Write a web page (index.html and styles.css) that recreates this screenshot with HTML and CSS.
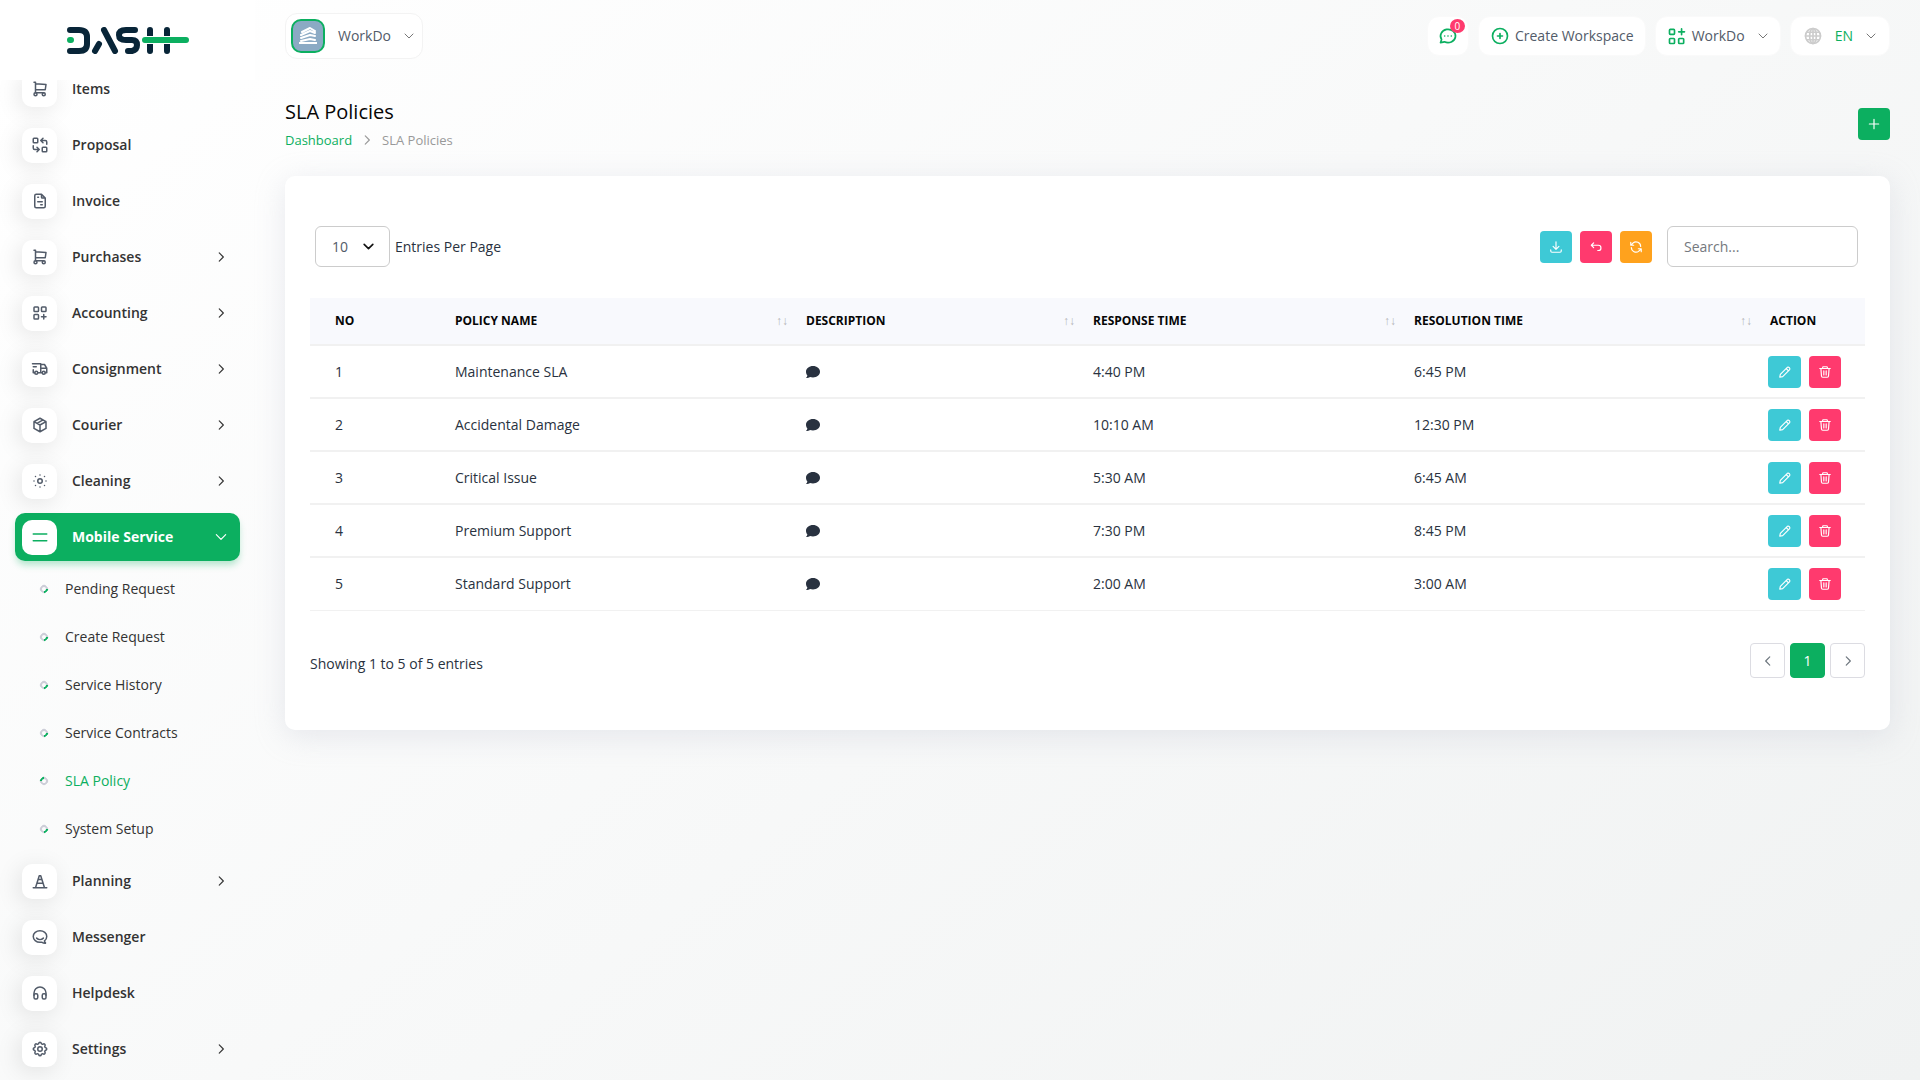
FILE: index.html
```html
<!DOCTYPE html>
<html lang="en">
<head>
    <meta charset="UTF-8">
    <meta name="viewport" content="width=device-width, initial-scale=1.0">
    <title>SLA Policies | WorkDo Dash</title>
    <link rel="stylesheet" href="styles.css">
</head>
<body>

    <!-- Icon set -->
    <svg class="icon-set" xmlns="http://www.w3.org/2000/svg" aria-hidden="true">
        <symbol id="i-cart" viewBox="0 0 24 24"><circle cx="6" cy="19" r="2"/><circle cx="17" cy="19" r="2"/><path d="M17 17H6V3H4M6 5l14 1-1 7H6"/></symbol>
        <symbol id="i-replace" viewBox="0 0 24 24"><rect x="3" y="3" width="6" height="6" rx="1"/><rect x="15" y="15" width="6" height="6" rx="1"/><path d="M21 11V8a2 2 0 0 0-2-2h-6l3 3m0-6-3 3M3 13v3a2 2 0 0 0 2 2h6l-3-3m0 6 3-3"/></symbol>
        <symbol id="i-invoice" viewBox="0 0 24 24"><path d="M14 3v4a1 1 0 0 0 1 1h4M17 21H7a2 2 0 0 1-2-2V5a2 2 0 0 1 2-2h7l5 5v11a2 2 0 0 1-2 2zM9 7h1M9 13h6M13 17h2"/></symbol>
        <symbol id="i-grid-add" viewBox="0 0 24 24"><rect x="4" y="4" width="6" height="6" rx="1"/><rect x="14" y="4" width="6" height="6" rx="1"/><rect x="4" y="14" width="6" height="6" rx="1"/><path d="M14 17h6M17 14v6"/></symbol>
        <symbol id="i-apps" viewBox="0 0 24 24"><rect x="3" y="4" width="6" height="6" rx="1"/><rect x="3" y="15" width="6" height="6" rx="1"/><rect x="14" y="15" width="6" height="6" rx="1"/><path d="M14 7h7M17.500 3.500v7"/></symbol>
        <symbol id="i-truck" viewBox="0 0 24 24"><circle cx="7" cy="17" r="2"/><circle cx="17" cy="17" r="2"/><path d="M5 17H3v-4M2 5h11v12m-4 0h6m4 0h2v-6h-8m0-5h5l3 5M3 9h4"/></symbol>
        <symbol id="i-package" viewBox="0 0 24 24"><path d="m12 3 8 4.500v9L12 21l-8-4.500v-9zM12 12l8-4.500M12 12v9M12 12 4 7.500M16 5.250l-8 4.500"/></symbol>
        <symbol id="i-sun" viewBox="0 0 24 24"><circle cx="12" cy="12" r="3"/><path d="M12 4h.01M18 6h.01M20 12h.01M18 18h.01M12 20h.01M6 18h.01M4 12h.01M6 6h.01"/></symbol>
        <symbol id="i-lines" viewBox="0 0 24 24"><path d="M3 8h18M3 17h18"/></symbol>
        <symbol id="i-cone" viewBox="0 0 24 24"><path d="M3 21h18M9.400 10h5.200M7.800 15h8.400M6 21l5-16h2l5 16"/></symbol>
        <symbol id="i-messenger" viewBox="0 0 24 24"><path d="M17.800 17.300s.1-.1.200-.2c1.800-1.400 3-3.500 3-5.800 0-4.300-4-7.700-9-7.700s-9 3.400-9 7.700S7 19 12 19c.4 0 1.100 0 2.100-.1 1.300.8 3.100 1.500 4.700 1.500.5 0 .7-.4.400-.8-.5-.6-1.100-1.600-1.400-2.300zM7.500 13.500c2.500 2.500 6.500 2.500 9 0"/></symbol>
        <symbol id="i-headset" viewBox="0 0 24 24"><rect x="4" y="13" width="5" height="7" rx="2"/><rect x="15" y="13" width="5" height="7" rx="2"/><path d="M4 15v-3a8 8 0 0 1 16 0v3"/></symbol>
        <symbol id="i-gear" viewBox="0 0 24 24"><path d="M10.325 4.317c.426-1.756 2.924-1.756 3.350 0a1.724 1.724 0 0 0 2.573 1.066c1.543-.94 3.310.826 2.370 2.370a1.724 1.724 0 0 0 1.065 2.572c1.756.426 1.756 2.924 0 3.350a1.724 1.724 0 0 0-1.066 2.573c.94 1.543-.826 3.310-2.370 2.370a1.724 1.724 0 0 0-2.572 1.065c-.426 1.756-2.924 1.756-3.350 0a1.724 1.724 0 0 0-2.573-1.066c-1.543.94-3.310-.826-2.370-2.370a1.724 1.724 0 0 0-1.065-2.572c-1.756-.426-1.756-2.924 0-3.350a1.724 1.724 0 0 0 1.066-2.573c-.94-1.543.826-3.310 2.370-2.370 1 .608 2.296.07 2.572-1.065z"/><circle cx="12" cy="12" r="3"/></symbol>
        <symbol id="i-right" viewBox="0 0 24 24"><path d="m9 5 7 7-7 7"/></symbol>
        <symbol id="i-left" viewBox="0 0 24 24"><path d="m15 5-7 7 7 7"/></symbol>
        <symbol id="i-down" viewBox="0 0 24 24"><path d="m4 8 8 8 8-8"/></symbol>
        <symbol id="i-chat" viewBox="0 0 24 24"><path d="m3 20 1.300-3.900a9 8 0 1 1 3.400 2.900zM8 12h.01M12 12h.01M16 12h.01"/></symbol>
        <symbol id="i-plus-circle" viewBox="0 0 24 24"><circle cx="12" cy="12" r="9"/><path d="M9 12h6M12 9v6"/></symbol>
        <symbol id="i-globe" viewBox="0 0 24 24"><circle cx="12" cy="12" r="9"/><ellipse cx="12" cy="12" rx="4" ry="9"/><path d="M3 12h18M12 3v18M4.500 7.500h15M4.500 16.500h15"/></symbol>
        <symbol id="i-plus" viewBox="0 0 24 24"><path d="M12 4v16M4 12h16"/></symbol>
        <symbol id="i-download" viewBox="0 0 24 24"><path d="M3 17v2a2 2 0 0 0 2 2h14a2 2 0 0 0 2-2v-2M7 11l5 5 5-5M12 3v13"/></symbol>
        <symbol id="i-undo" viewBox="0 0 24 24"><path d="M8 13 4 9l4-4M4 9h12a4 4 0 0 1 0 9h-1"/></symbol>
        <symbol id="i-refresh" viewBox="0 0 24 24"><path d="M4 13a8 8 0 0 0 13 6M20 11A8 8 0 0 0 7 5M3 4v5h5M21 20v-5h-5M4 9a9 9 0 0 1 3-4M20 15a9 9 0 0 1-3 4"/></symbol>
        <symbol id="i-pencil" viewBox="0 0 24 24"><path d="M3 21l1-5L16 4a3 3 0 0 1 4 4L8 20zM14 6l4 4"/></symbol>
        <symbol id="i-trash" viewBox="0 0 24 24"><path d="M3 6h18M10 10v7M14 10v7M5 6l1 13a2 2 0 0 0 2 2h8a2 2 0 0 0 2-2l1-13M8 6V4a1 1 0 0 1 1-1h6a1 1 0 0 1 1 1v2"/></symbol>
        <symbol id="i-comment" viewBox="0 0 14 14"><path d="M7 1c3.900 0 7 2.500 7 5.700s-3.100 5.700-7 5.700c-1.100 0-2.100-.2-3-.5-.9.700-2.300 1.100-4 1.100.8-.8 1.300-1.700 1.400-2.600C.5 9.400 0 8.100 0 6.700 0 3.500 3.100 1 7 1z"/></symbol>
    </svg>

    <aside class="sidebar">
        <a class="logo" href="#" aria-label="Dash">
            <svg width="123" height="27" viewBox="0 0 123 27">
                <path d="M4 3h9q8 0 8 7v7q0 7-8 7H4"/>
                <path d="M29 24l4-7M38 3l11 21"/>
                <path d="M69 3H60q-7 0-7 5t7 5h6q5 0 5 5t-5 6H62"/>
                <path d="M84 3v21M101 3v21"/>
                <path class="gap" d="M80 13h38"/>
                <path class="bar" d="M4 13h1M79 13h41"/>
            </svg>
        </a>
        <nav class="menu" aria-label="Main">
            <ul class="menu-list">
                <li><a href="#"><span class="menu-icon"><svg><use href="#i-cart"/></svg></span>Items</a></li>
                <li><a href="#"><span class="menu-icon"><svg><use href="#i-replace"/></svg></span>Proposal</a></li>
                <li><a href="#"><span class="menu-icon"><svg><use href="#i-invoice"/></svg></span>Invoice</a></li>
                <li><a href="#"><span class="menu-icon"><svg><use href="#i-cart"/></svg></span>Purchases<svg class="arrow"><use href="#i-right"/></svg></a></li>
                <li><a href="#"><span class="menu-icon"><svg><use href="#i-grid-add"/></svg></span>Accounting<svg class="arrow"><use href="#i-right"/></svg></a></li>
                <li><a href="#"><span class="menu-icon"><svg><use href="#i-truck"/></svg></span>Consignment<svg class="arrow"><use href="#i-right"/></svg></a></li>
                <li><a href="#"><span class="menu-icon"><svg><use href="#i-package"/></svg></span>Courier<svg class="arrow"><use href="#i-right"/></svg></a></li>
                <li><a href="#"><span class="menu-icon"><svg><use href="#i-sun"/></svg></span>Cleaning<svg class="arrow"><use href="#i-right"/></svg></a></li>
                <li>
                    <a class="active" href="#"><span class="menu-icon"><svg><use href="#i-lines"/></svg></span>Mobile Service<svg class="arrow"><use href="#i-down"/></svg></a>
                    <ul class="submenu">
                        <li><a href="#">Pending Request</a></li>
                        <li><a href="#">Create Request</a></li>
                        <li><a href="#">Service History</a></li>
                        <li><a href="#">Service Contracts</a></li>
                        <li><a class="current" href="#" aria-current="page">SLA Policy</a></li>
                        <li><a href="#">System Setup</a></li>
                    </ul>
                </li>
                <li><a href="#"><span class="menu-icon"><svg><use href="#i-cone"/></svg></span>Planning<svg class="arrow"><use href="#i-right"/></svg></a></li>
                <li><a href="#"><span class="menu-icon"><svg><use href="#i-messenger"/></svg></span>Messenger</a></li>
                <li><a href="#"><span class="menu-icon"><svg><use href="#i-headset"/></svg></span>Helpdesk</a></li>
                <li><a href="#"><span class="menu-icon"><svg><use href="#i-gear"/></svg></span>Settings<svg class="arrow"><use href="#i-right"/></svg></a></li>
            </ul>
        </nav>
    </aside>

    <div class="page">
        <header class="topbar">
            <button class="top-btn profile" type="button">
                <span class="avatar">
                    <svg viewBox="0 0 18 18"><path d="M3 5l8-4 5 3M2 8l9-4 5 2M2 11l9-3 5 1M2 14l9-2 5 1M0 16h18"/></svg>
                </span>
                WorkDo
                <svg class="caret"><use href="#i-down"/></svg>
            </button>
            <div class="top-actions">
                <button class="top-btn chat" type="button" aria-label="Messages"><svg><use href="#i-chat"/></svg><span class="badge">0</span></button>
                <button class="top-btn" type="button"><svg><use href="#i-plus-circle"/></svg>Create Workspace</button>
                <button class="top-btn" type="button"><svg><use href="#i-apps"/></svg>WorkDo<svg class="caret"><use href="#i-down"/></svg></button>
                <button class="top-btn lang" type="button"><svg class="globe"><use href="#i-globe"/></svg>EN<svg class="caret"><use href="#i-down"/></svg></button>
            </div>
        </header>

        <main>
            <div class="page-header">
                <div>
                    <h1>SLA Policies</h1>
                    <nav class="breadcrumb" aria-label="Breadcrumb">
                        <a href="#">Dashboard</a>
                        <svg><use href="#i-right"/></svg>
                        <span>SLA Policies</span>
                    </nav>
                </div>
                <button class="btn btn-green" type="button" aria-label="Create"><svg><use href="#i-plus"/></svg></button>
            </div>

            <section class="card">
                <div class="toolbar">
                    <div class="entries">
                        <div class="select-wrap">
                            <select id="per-page">
                                <option>10</option>
                                <option>25</option>
                                <option>50</option>
                            </select>
                            <svg><use href="#i-down"/></svg>
                        </div>
                        <label for="per-page">Entries Per Page</label>
                    </div>
                    <div class="tools">
                        <button class="btn btn-cyan" type="button" aria-label="Export"><svg><use href="#i-download"/></svg></button>
                        <button class="btn btn-pink" type="button" aria-label="Reset"><svg><use href="#i-undo"/></svg></button>
                        <button class="btn btn-orange" type="button" aria-label="Reload"><svg><use href="#i-refresh"/></svg></button>
                        <input class="search" type="text" placeholder="Search..." aria-label="Search">
                    </div>
                </div>

                <table>
                    <colgroup>
                        <col class="col-no"><col class="col-name"><col class="col-desc"><col class="col-response"><col class="col-resolution"><col class="col-action">
                    </colgroup>
                    <thead>
                        <tr>
                            <th>No</th>
                            <th><div class="sort">Policy Name<span>↑↓</span></div></th>
                            <th><div class="sort">Description<span>↑↓</span></div></th>
                            <th><div class="sort">Response Time<span>↑↓</span></div></th>
                            <th><div class="sort">Resolution Time<span>↑↓</span></div></th>
                            <th>Action</th>
                        </tr>
                    </thead>
                    <tbody>
                        <tr>
                            <td>1</td>
                            <td>Maintenance SLA</td>
                            <td><a class="comment" href="#" aria-label="Description"><svg><use href="#i-comment"/></svg></a></td>
                            <td>4:40 PM</td>
                            <td>6:45 PM</td>
                            <td><div class="actions"><button class="btn btn-cyan" type="button" aria-label="Edit"><svg><use href="#i-pencil"/></svg></button><button class="btn btn-pink" type="button" aria-label="Delete"><svg><use href="#i-trash"/></svg></button></div></td>
                        </tr>
                        <tr>
                            <td>2</td>
                            <td>Accidental Damage</td>
                            <td><a class="comment" href="#" aria-label="Description"><svg><use href="#i-comment"/></svg></a></td>
                            <td>10:10 AM</td>
                            <td>12:30 PM</td>
                            <td><div class="actions"><button class="btn btn-cyan" type="button" aria-label="Edit"><svg><use href="#i-pencil"/></svg></button><button class="btn btn-pink" type="button" aria-label="Delete"><svg><use href="#i-trash"/></svg></button></div></td>
                        </tr>
                        <tr>
                            <td>3</td>
                            <td>Critical Issue</td>
                            <td><a class="comment" href="#" aria-label="Description"><svg><use href="#i-comment"/></svg></a></td>
                            <td>5:30 AM</td>
                            <td>6:45 AM</td>
                            <td><div class="actions"><button class="btn btn-cyan" type="button" aria-label="Edit"><svg><use href="#i-pencil"/></svg></button><button class="btn btn-pink" type="button" aria-label="Delete"><svg><use href="#i-trash"/></svg></button></div></td>
                        </tr>
                        <tr>
                            <td>4</td>
                            <td>Premium Support</td>
                            <td><a class="comment" href="#" aria-label="Description"><svg><use href="#i-comment"/></svg></a></td>
                            <td>7:30 PM</td>
                            <td>8:45 PM</td>
                            <td><div class="actions"><button class="btn btn-cyan" type="button" aria-label="Edit"><svg><use href="#i-pencil"/></svg></button><button class="btn btn-pink" type="button" aria-label="Delete"><svg><use href="#i-trash"/></svg></button></div></td>
                        </tr>
                        <tr>
                            <td>5</td>
                            <td>Standard Support</td>
                            <td><a class="comment" href="#" aria-label="Description"><svg><use href="#i-comment"/></svg></a></td>
                            <td>2:00 AM</td>
                            <td>3:00 AM</td>
                            <td><div class="actions"><button class="btn btn-cyan" type="button" aria-label="Edit"><svg><use href="#i-pencil"/></svg></button><button class="btn btn-pink" type="button" aria-label="Delete"><svg><use href="#i-trash"/></svg></button></div></td>
                        </tr>
                    </tbody>
                </table>

                <div class="table-footer">
                    <p>Showing 1 to 5 of 5 entries</p>
                    <div class="pagination">
                        <button type="button" aria-label="Previous"><svg><use href="#i-left"/></svg></button>
                        <button class="active" type="button">1</button>
                        <button type="button" aria-label="Next"><svg><use href="#i-right"/></svg></button>
                    </div>
                </div>
            </section>
        </main>
    </div>

</body>
</html>
```

FILE: styles.css
```css
*,
*::before {
    box-sizing: border-box;
}
body {
    display: flex;
    min-height: 100vh;
    margin: 0;
    font-family: "Open Sans", "Noto Sans", sans-serif;
    font-size: 14px;
    line-height: 20px;
    color: #293240;
    background: linear-gradient(141deg, rgba(240, 244, 243, 0) 3%, #f0f2f2 100%) #fff;
}
a {
    color: inherit;
    text-decoration: none;
}
button {
    font: inherit;
    color: inherit;
    cursor: pointer;
}
svg {
    flex: none;
    fill: none;
    stroke: currentColor;
    stroke-width: 2;
    stroke-linecap: round;
    stroke-linejoin: round;
}
.icon-set {
    display: none;
}

/* Sidebar */
.sidebar {
    display: flex;
    flex-direction: column;
    width: 255px;
    height: 100vh;
    flex: none;
}
.logo {
    display: flex;
    align-items: center;
    justify-content: center;
    height: 80px;
    flex: none;
    background: #fff;
}
.logo svg {
    stroke: #082538;
    stroke-width: 6;
}
.logo .gap {
    stroke: #fff;
    stroke-width: 8;
    stroke-linecap: butt;
}
.logo .bar {
    stroke: #0caf60;
}
.menu {
    flex: 1;
    overflow: hidden;
}
.menu ul {
    margin: 0;
    padding: 0;
    list-style: none;
}
.menu .menu-list {
    margin-top: -19px;
    padding: 0 15px;
}
.menu-list > li {
    display: flow-root;
}
.menu-list > li > a {
    display: flex;
    align-items: center;
    height: 48px;
    margin: 4px 0;
    padding: 0 12px 0 7px;
    border-radius: 10px;
    font-weight: 600;
    color: #333;
}
.menu-icon {
    display: flex;
    align-items: center;
    justify-content: center;
    width: 35px;
    height: 35px;
    margin-right: 15px;
    border-radius: 10px;
    background: #fff;
    box-shadow: -3px 4px 23px rgba(0, 0, 0, 0.1);
    color: #525b69;
}
.menu-icon svg {
    width: 18px;
    height: 18px;
}
.arrow {
    width: 14px;
    height: 14px;
    margin-left: auto;
}
.menu-list > li > a.active {
    background: #0caf60;
    color: #fff;
    font-weight: 700;
    box-shadow: 0 5px 7px -1px rgba(12, 175, 96, 0.3);
}
.active .menu-icon {
    color: #0caf60;
    box-shadow: none;
}
.submenu a {
    display: flex;
    align-items: center;
    height: 48px;
    padding-left: 25px;
    color: #333;
}
.submenu a::before {
    content: "";
    width: 8px;
    height: 8px;
    margin-right: 17px;
    border: 2px solid #cdced8;
    border-right-color: #0caf60;
    border-radius: 50%;
    transform: rotate(45deg);
}
.submenu a.current {
    color: #0caf60;
}
.submenu a.current::before {
    transform: rotate(225deg);
}

/* Top bar */
.page {
    flex: 1;
    min-width: 0;
    padding: 0 30px;
}
.topbar {
    display: flex;
    align-items: center;
    justify-content: space-between;
    height: 71px;
}
.top-btn {
    display: flex;
    align-items: center;
    height: 40px;
    padding: 0 11px;
    border: 1px solid #fafafa;
    border-radius: 12px;
    background: #fff;
    color: #525b69;
}
.top-btn svg {
    width: 20px;
    height: 20px;
    margin-right: 5px;
    color: #0caf60;
}
.top-btn .caret {
    width: 12px;
    height: 12px;
    margin: 0 0 0 12px;
    color: #777;
}
.profile {
    height: 46px;
    padding: 0 7px 0 5px;
    border-color: #f3f3f3;
}
.avatar {
    display: flex;
    align-items: center;
    justify-content: center;
    width: 34px;
    height: 34px;
    margin-right: 13px;
    border: 2px solid #0caf60;
    border-radius: 10px;
    background: #8baac4;
}
.top-btn .avatar svg {
    width: 18px;
    height: 18px;
    margin: 0;
    color: #fff;
}
.top-actions {
    display: flex;
    gap: 9px;
}
.chat {
    position: relative;
    padding: 0 10px;
}
.top-btn.chat svg {
    margin: 0;
}
.badge {
    position: absolute;
    top: 2px;
    right: 3px;
    width: 15px;
    height: 14px;
    border-radius: 50%;
    background: #ff3a6e;
    color: #fff;
    font-size: 10px;
    line-height: 14px;
}
.lang {
    padding: 0 12px;
    color: #0caf60;
}
.top-btn .globe {
    margin-right: 12px;
    color: #ccc;
}

/* Page header */
.page-header {
    display: flex;
    align-items: center;
    justify-content: space-between;
    height: 105px;
}
h1 {
    margin: 0;
    font-size: 20px;
    font-weight: 400;
    line-height: 32px;
    color: #060606;
}
.breadcrumb {
    display: flex;
    align-items: center;
    gap: 8px;
    font-size: 13px;
    line-height: 24px;
    color: #999;
}
.breadcrumb a {
    color: #0caf60;
}
.breadcrumb svg {
    width: 14px;
    height: 14px;
}
.btn {
    display: flex;
    align-items: center;
    justify-content: center;
    width: 32px;
    height: 32px;
    padding: 0;
    border: none;
    border-radius: 4px;
    color: #fff;
}
.btn svg {
    width: 14px;
    height: 14px;
}
.btn-green {
    background: #0caf60;
}
.btn-cyan {
    background: #3ec9d6;
}
.btn-pink {
    background: #ff3a6e;
}
.btn-orange {
    background: #ffa21d;
}

/* Card */
.card {
    padding: 50px 25px 52px;
    border-radius: 10px;
    background: #fff;
    box-shadow: 0 6px 30px rgba(182, 186, 203, 0.3);
}
.toolbar {
    display: flex;
    justify-content: space-between;
    margin-bottom: 31px;
    padding: 0 7px 0 5px;
}
.entries,
.tools {
    display: flex;
    align-items: center;
    gap: 8px;
}
.entries {
    gap: 5px;
}
.select-wrap {
    position: relative;
}
select {
    width: 75px;
    height: 41px;
    padding: 0 16px;
    border: 1px solid #ccc;
    border-radius: 6px;
    appearance: none;
    background: #fff;
    font: inherit;
    color: #525b69;
}
.select-wrap svg {
    position: absolute;
    top: 14px;
    right: 15px;
    width: 13px;
    height: 13px;
    color: #111;
    stroke-width: 3;
    pointer-events: none;
}
.search {
    width: 191px;
    height: 41px;
    margin-left: 7px;
    padding: 0 16px;
    border: 1px solid #ccc;
    border-radius: 6px;
    font: inherit;
}
.search::placeholder {
    color: #75797e;
}

/* Policies table */
table {
    width: 100%;
    border-collapse: separate;
    border-spacing: 0;
    table-layout: fixed;
}
.col-no {
    width: 135px;
}
.col-name {
    width: 351px;
}
.col-desc {
    width: 287px;
}
.col-response {
    width: 321px;
}
.col-resolution {
    width: 356px;
}
.col-action {
    width: 105px;
}
th,
td {
    padding: 0 8px 0 10px;
    text-align: left;
    border-bottom: 2px solid #f1f1f1;
}
th {
    height: 48px;
    background: #f8f9fd;
    font-size: 12px;
    font-weight: 700;
    text-transform: uppercase;
    color: #060606;
}
td {
    height: 53px;
}
tbody tr:last-child td {
    border-bottom-width: 1px;
}
th:first-child,
td:first-child {
    padding-left: 25px;
}
td:last-child {
    padding-left: 8px;
}
.sort {
    display: flex;
    justify-content: space-between;
}
.sort span {
    font-weight: 400;
    color: #b5b5b8;
}
.comment {
    display: flex;
}
.comment svg {
    width: 14px;
    height: 14px;
    fill: currentColor;
    stroke: none;
}
.actions {
    display: flex;
    gap: 8px;
}
.actions .btn-cyan {
    width: 33px;
}
.table-footer {
    display: flex;
    align-items: center;
    justify-content: space-between;
    margin-top: 32px;
}
.table-footer p {
    margin: 6px 0 0;
}
.pagination {
    display: flex;
    gap: 5px;
}
.pagination button {
    display: flex;
    align-items: center;
    justify-content: center;
    width: 35px;
    height: 35px;
    padding: 0;
    border: 1px solid #dcdce2;
    border-radius: 4px;
    background: #fff;
    color: #6c757d;
}
.pagination button.active {
    border-color: #0caf60;
    background: #0caf60;
    color: #fff;
}
.pagination svg {
    width: 14px;
    height: 14px;
}
```
